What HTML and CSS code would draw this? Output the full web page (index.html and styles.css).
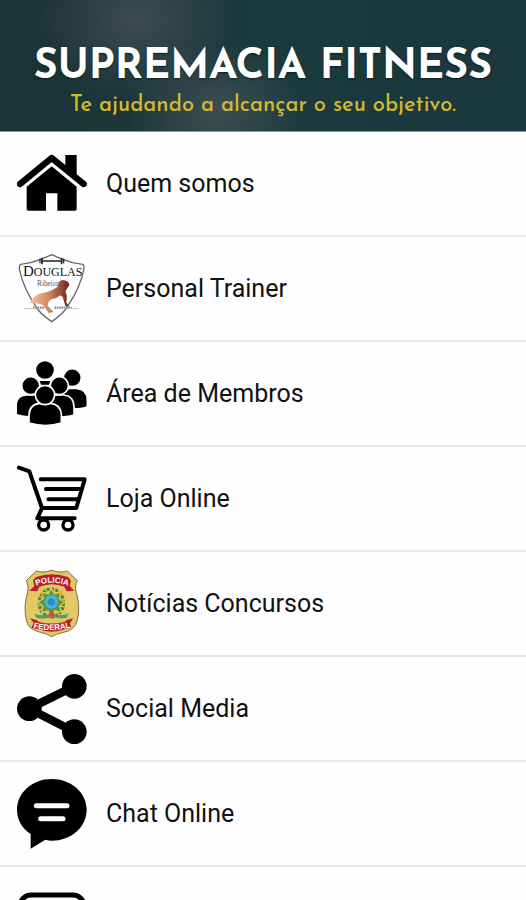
FILE: index.html
```html
<!DOCTYPE html>
<html lang="pt-BR">
<head>
    <meta charset="UTF-8">
    <meta name="viewport" content="width=device-width, initial-scale=1.0">
    <title>Supremacia Fitness</title>
    <link rel="stylesheet" href="styles.css">
</head>
<body>

    <header class="banner">
        <h1>SUPREMACIA FITNESS</h1>
        <p>Te ajudando a alcançar o seu objetivo.</p>
    </header>

    <nav class="menu">
        <a class="menu-item" href="#quem-somos">
            <svg class="icon" viewBox="51 27 210 210" aria-hidden="true">
                <path d="M60 132L155 54L251 132" fill="none" stroke="#000" stroke-width="19" stroke-linecap="round" stroke-linejoin="round"/>
                <path d="M196 45H230V112L196 84Z"/>
                <path d="M155 79L230 140V207Q230 212 225 212H172V160H138V212H85Q80 212 80 207V140Z"/>
            </svg>
            <span>Quem somos</span>
        </a>
        <a class="menu-item" href="#personal-trainer">
            <svg class="icon" viewBox="21 27 210 210" aria-hidden="true">
                <defs>
                    <linearGradient id="body" x1="0" x2="1">
                        <stop offset="0" stop-color="#f2c9a0"/>
                        <stop offset=".5" stop-color="#cf8460"/>
                        <stop offset="1" stop-color="#6b2517"/>
                    </linearGradient>
                </defs>
                <path d="M125 29L152 41Q185 55 218 58Q224 61 221 76Q210 128 174 182Q162 205 125 230Q88 205 76 182Q40 128 29 76Q26 61 32 58Q65 55 98 41Z" fill="#fff" stroke="#666" stroke-width="4"/>
                <path d="M94 48H156M96 38V58M155 38V58" fill="none" stroke="#222" stroke-width="5"/>
                <path d="M90 41V55M161 41V55" stroke="#222" stroke-width="4"/>
                <rect x="38" y="66" width="174" height="30" fill="#fff"/>
                <text class="logo-name" x="128" y="94" text-anchor="middle">D<tspan class="logo-small">OUGLAS</tspan></text>
                <text class="logo-sub" x="114" y="124" text-anchor="middle">Ribeiro</text>
                <path d="M58 174Q73 148 97 144Q122 140 143 125Q143 107 158 105Q177 106 178 120Q171 131 166 140Q173 150 169 172L177 184L166 183L158 156L151 151Q140 161 125 163Q113 168 113 182L130 201L116 204L100 181Q84 172 58 174Z" fill="url(#body)"/>
                <path d="M43 191H103M132 191H207" stroke="#aaa" stroke-width="2"/>
                <path d="M69 187H103M133 187H185" stroke="#888" stroke-width="5" stroke-dasharray="5 2"/>
            </svg>
            <span>Personal Trainer</span>
        </a>
        <a class="menu-item" href="#membros">
            <svg class="icon" viewBox="21 27 210 210" aria-hidden="true">
                <g stroke="#fff" stroke-width="5">
                    <circle cx="105" cy="60" r="29"/>
                    <path d="M147 168Q147 115 177 115H199Q232 117 232 150V170Q215 179 176 176Z"/>
                    <circle cx="187" cy="83" r="27"/>
                    <path d="M18 194V169Q19 136 48 135H75Q98 137 98 170V201Q44 203 18 194Z"/>
                    <circle cx="62" cy="107" r="27"/>
                    <path d="M112 200V165Q116 135 143 135H162Q191 138 192 170V195Q162 204 112 200Z"/>
                    <circle cx="148" cy="107" r="27"/>
                    <path d="M57 219V194Q59 162 90 160H122Q152 163 154 194V219Q107 234 57 219Z"/>
                    <circle cx="105" cy="135" r="29"/>
                </g>
                <path d="M89 93H121L117 104H93Z"/>
            </svg>
            <span>Área de Membros</span>
        </a>
        <a class="menu-item" href="#loja">
            <svg class="icon" viewBox="21 27 210 210" aria-hidden="true">
                <g fill="none" stroke="#000" stroke-width="12" stroke-linecap="round" stroke-linejoin="round">
                    <path d="M27 38L58 49L96 159L82 190H194"/>
                    <path d="M92 73H224L199 159H96"/>
                    <path d="M108 102H212M115 133H204"/>
                    <circle cx="101" cy="210" r="15" stroke-width="10"/>
                    <circle cx="174" cy="210" r="15" stroke-width="10"/>
                </g>
            </svg>
            <span>Loja Online</span>
        </a>
        <a class="menu-item" href="#noticias">
            <svg class="icon" viewBox="21 27 210 210" aria-hidden="true">
                <path d="M79 33Q102 41 125 30Q148 41 172 33L202 62Q192 78 200 101Q211 143 202 180Q196 211 157 218Q138 221 125 230Q109 220 91 217Q53 208 49 180Q40 140 52 101Q59 80 49 62Z" fill="#e5c865" stroke="#777145" stroke-width="3"/>
                <path d="M69 60L78 51Q126 35 174 51L183 62L179 78L193 92L170 94L163 80Q125 65 88 80L82 94L58 92L73 78Z" fill="#b81f28"/>
                <path d="M60 175L82 181L85 185Q125 196 165 185L170 180L190 175L180 190L184 202L168 207Q125 223 83 207L64 203L71 189Z" fill="#b81f28"/>
                <ellipse cx="124" cy="129" rx="36" ry="42" fill="none" stroke="#48834b" stroke-width="10" stroke-dasharray="9 4"/>
                <path d="M124 84L133 102L153 96L148 116L164 126L149 138L154 157L134 152L124 169L114 152L95 157L99 138L84 126L100 116L95 96L115 102Z" fill="#579554" stroke="#e4c633" stroke-width="4"/>
                <circle cx="124" cy="126" r="20" fill="#42b9d7"/>
                <circle cx="124" cy="126" r="11" fill="#2c91b6"/>
                <path d="M73 161Q98 170 119 163L130 163Q152 170 177 160L169 174Q143 178 126 169Q105 180 79 173Z" fill="#48a16b"/>
                <path d="M116 163L125 150L134 163L125 177Z" fill="#d34b34"/>
                <path id="ribbon-top" d="M72 80Q126 56 181 80" fill="none"/>
                <path id="ribbon-bottom" d="M65 202Q125 219 187 201" fill="none"/>
                <text class="badge-text"><textPath href="#ribbon-top" startOffset="50%" text-anchor="middle">POLICIA</textPath></text>
                <text class="badge-text"><textPath href="#ribbon-bottom" startOffset="50%" text-anchor="middle">FEDERAL</textPath></text>
            </svg>
            <span>Notícias Concursos</span>
        </a>
        <a class="menu-item" href="#social">
            <svg class="icon" viewBox="21 27 210 210" aria-hidden="true">
                <path d="M193 64L57 131L193 200" fill="none" stroke="#000" stroke-width="25"/>
                <circle cx="193" cy="64" r="37"/>
                <circle cx="58" cy="131" r="37"/>
                <circle cx="193" cy="200" r="37"/>
            </svg>
            <span>Social Media</span>
        </a>
        <a class="menu-item" href="#chat">
            <svg class="icon" viewBox="21 27 210 210" aria-hidden="true">
                <path d="M125 27C184 27 230 68 230 119C230 171 184 212 125 212Q115 212 106 209L62 236V192C36 175 21 148 21 119C21 68 67 27 125 27Z"/>
                <path d="M79 107H171M92 146H159" stroke="#fff" stroke-width="15" stroke-linecap="round"/>
            </svg>
            <span>Chat Online</span>
        </a>
        <a class="menu-item" href="#contato" aria-label="Contato">
            <svg class="icon" viewBox="0 0 70 70" aria-hidden="true">
                <rect x="3" y="11" width="64" height="57" rx="11" fill="none" stroke="#000" stroke-width="5"/>
            </svg>
        </a>
    </nav>

</body>
</html>
```
FILE: styles.css
```css
* {
    margin: 0;
    padding: 0;
    box-sizing: border-box;
}

body {
    font-family: Roboto, Arial, sans-serif;
    background-color: #fefefe;
    color: #111;
    display: flex;
    flex-direction: column;
    height: 100vh;
    overflow: hidden;
}

.banner {
    flex: none;
    padding: 43px 16px 12px;
    text-align: center;
    color: #fff;
    border-bottom: 1px solid #869797;
    background:
        radial-gradient(ellipse 100px 80px at 26% 15%, rgba(110, 110, 115, 0.4), transparent),
        radial-gradient(ellipse 90px 70px at 41% 85%, rgba(110, 110, 115, 0.4), transparent),
        linear-gradient(90deg, #1b3236, #1b3a3e 50%, #1a383d);
}

.banner h1 {
    font-family: "Josefin Sans", Lato, sans-serif;
    font-size: 41px;
    line-height: 50px;
    font-weight: bold;
    white-space: nowrap;
    text-shadow: 0 1px 2px #0b2022;
}

.banner p {
    font-family: "Josefin Sans", Lato, sans-serif;
    font-size: 22px;
    font-weight: 500;
    line-height: 26px;
    color: #d4b82e;
}

.menu {
    flex: 1;
    overflow-y: auto;
    scrollbar-width: none;
}

.menu-item {
    display: flex;
    align-items: center;
    gap: 19px;
    height: 105px;
    padding: 0 17px;
    border-bottom: 2px solid #e8e8e8;
    color: inherit;
    font-size: 25px;
    line-height: 32px;
    text-decoration: none;
}

.menu-item:hover {
    background-color: #f3f3f3;
}

.icon {
    flex: none;
    width: 70px;
    height: 70px;
}

.logo-name {
    font-family: "Liberation Serif", serif;
    font-size: 45px;
    fill: #111;
}

.logo-small {
    font-size: 36px;
}

.logo-sub {
    font-family: "Liberation Serif", serif;
    font-size: 22px;
    fill: #555;
}

.badge-text {
    font-family: "Liberation Sans", sans-serif;
    font-size: 24px;
    font-weight: bold;
    fill: #fff;
}
```
